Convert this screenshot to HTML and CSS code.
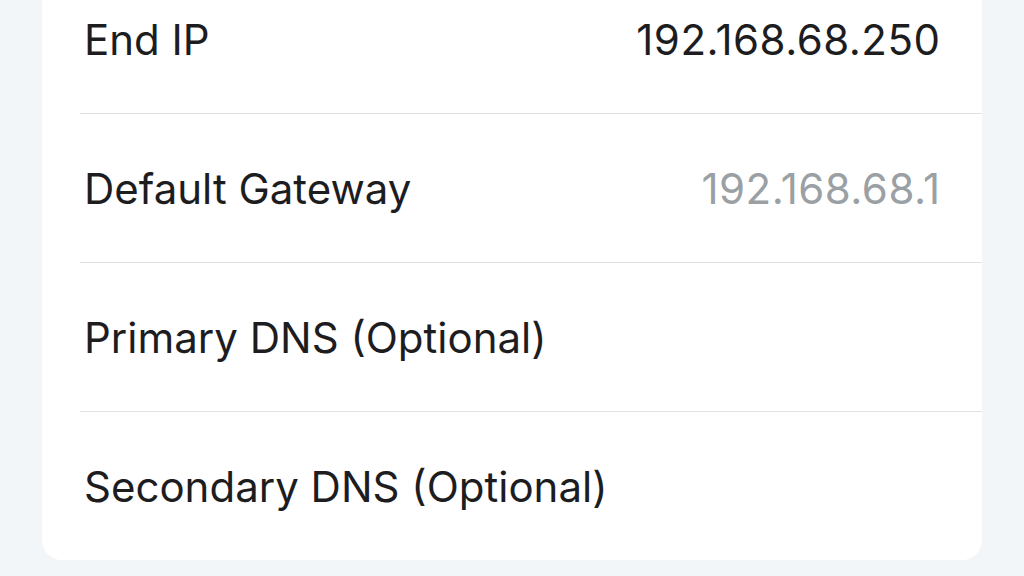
FILE: index.html
```html
<!DOCTYPE html>
<html lang="en">

<head>
    <meta charset="UTF-8">
    <meta name="viewport" content="width=device-width, initial-scale=1.0">
    <title>DHCP Settings</title>
    <link rel="stylesheet" href="styles.css">
</head>

<body>
    <div class="card">
        <div class="row">
            <span class="label">End IP</span>
            <span class="value">192.168.68.250</span>
        </div>
        <div class="row">
            <span class="label">Default Gateway</span>
            <span class="value muted">192.168.68.1</span>
        </div>
        <div class="row">
            <span class="label">Primary DNS (Optional)</span>
        </div>
        <div class="row">
            <span class="label">Secondary DNS (Optional)</span>
        </div>
    </div>
</body>

</html>
```

FILE: styles.css
```css
* {
    padding: 0;
    margin: 0;
    box-sizing: border-box;
}

body {
    font-family: Inter, "Noto Sans", sans-serif;
    background-color: #f2f6f9;
    color: #1d1d1f;
    height: 576px;
    overflow: hidden;
}

.card {
    margin: -35px 0 0 42px;
    width: 940px;
    padding-left: 38px;
    background-color: #fff;
    border-radius: 20px;
}

.row {
    display: flex;
    justify-content: space-between;
    align-items: center;
    height: 149px;
    padding-right: 42px;
    border-bottom: 1px solid #e2e2e4;
}

.row:last-child {
    border-bottom: 0;
    height: 148px;
}

.label,
.value {
    font-size: 42px;
    font-weight: 400;
}

.label {
    padding-left: 4px;
}

.value {
    letter-spacing: 0.5px;
    margin-right: -0.5px;
}

.value.muted {
    color: #9aa0a4;
}
```
